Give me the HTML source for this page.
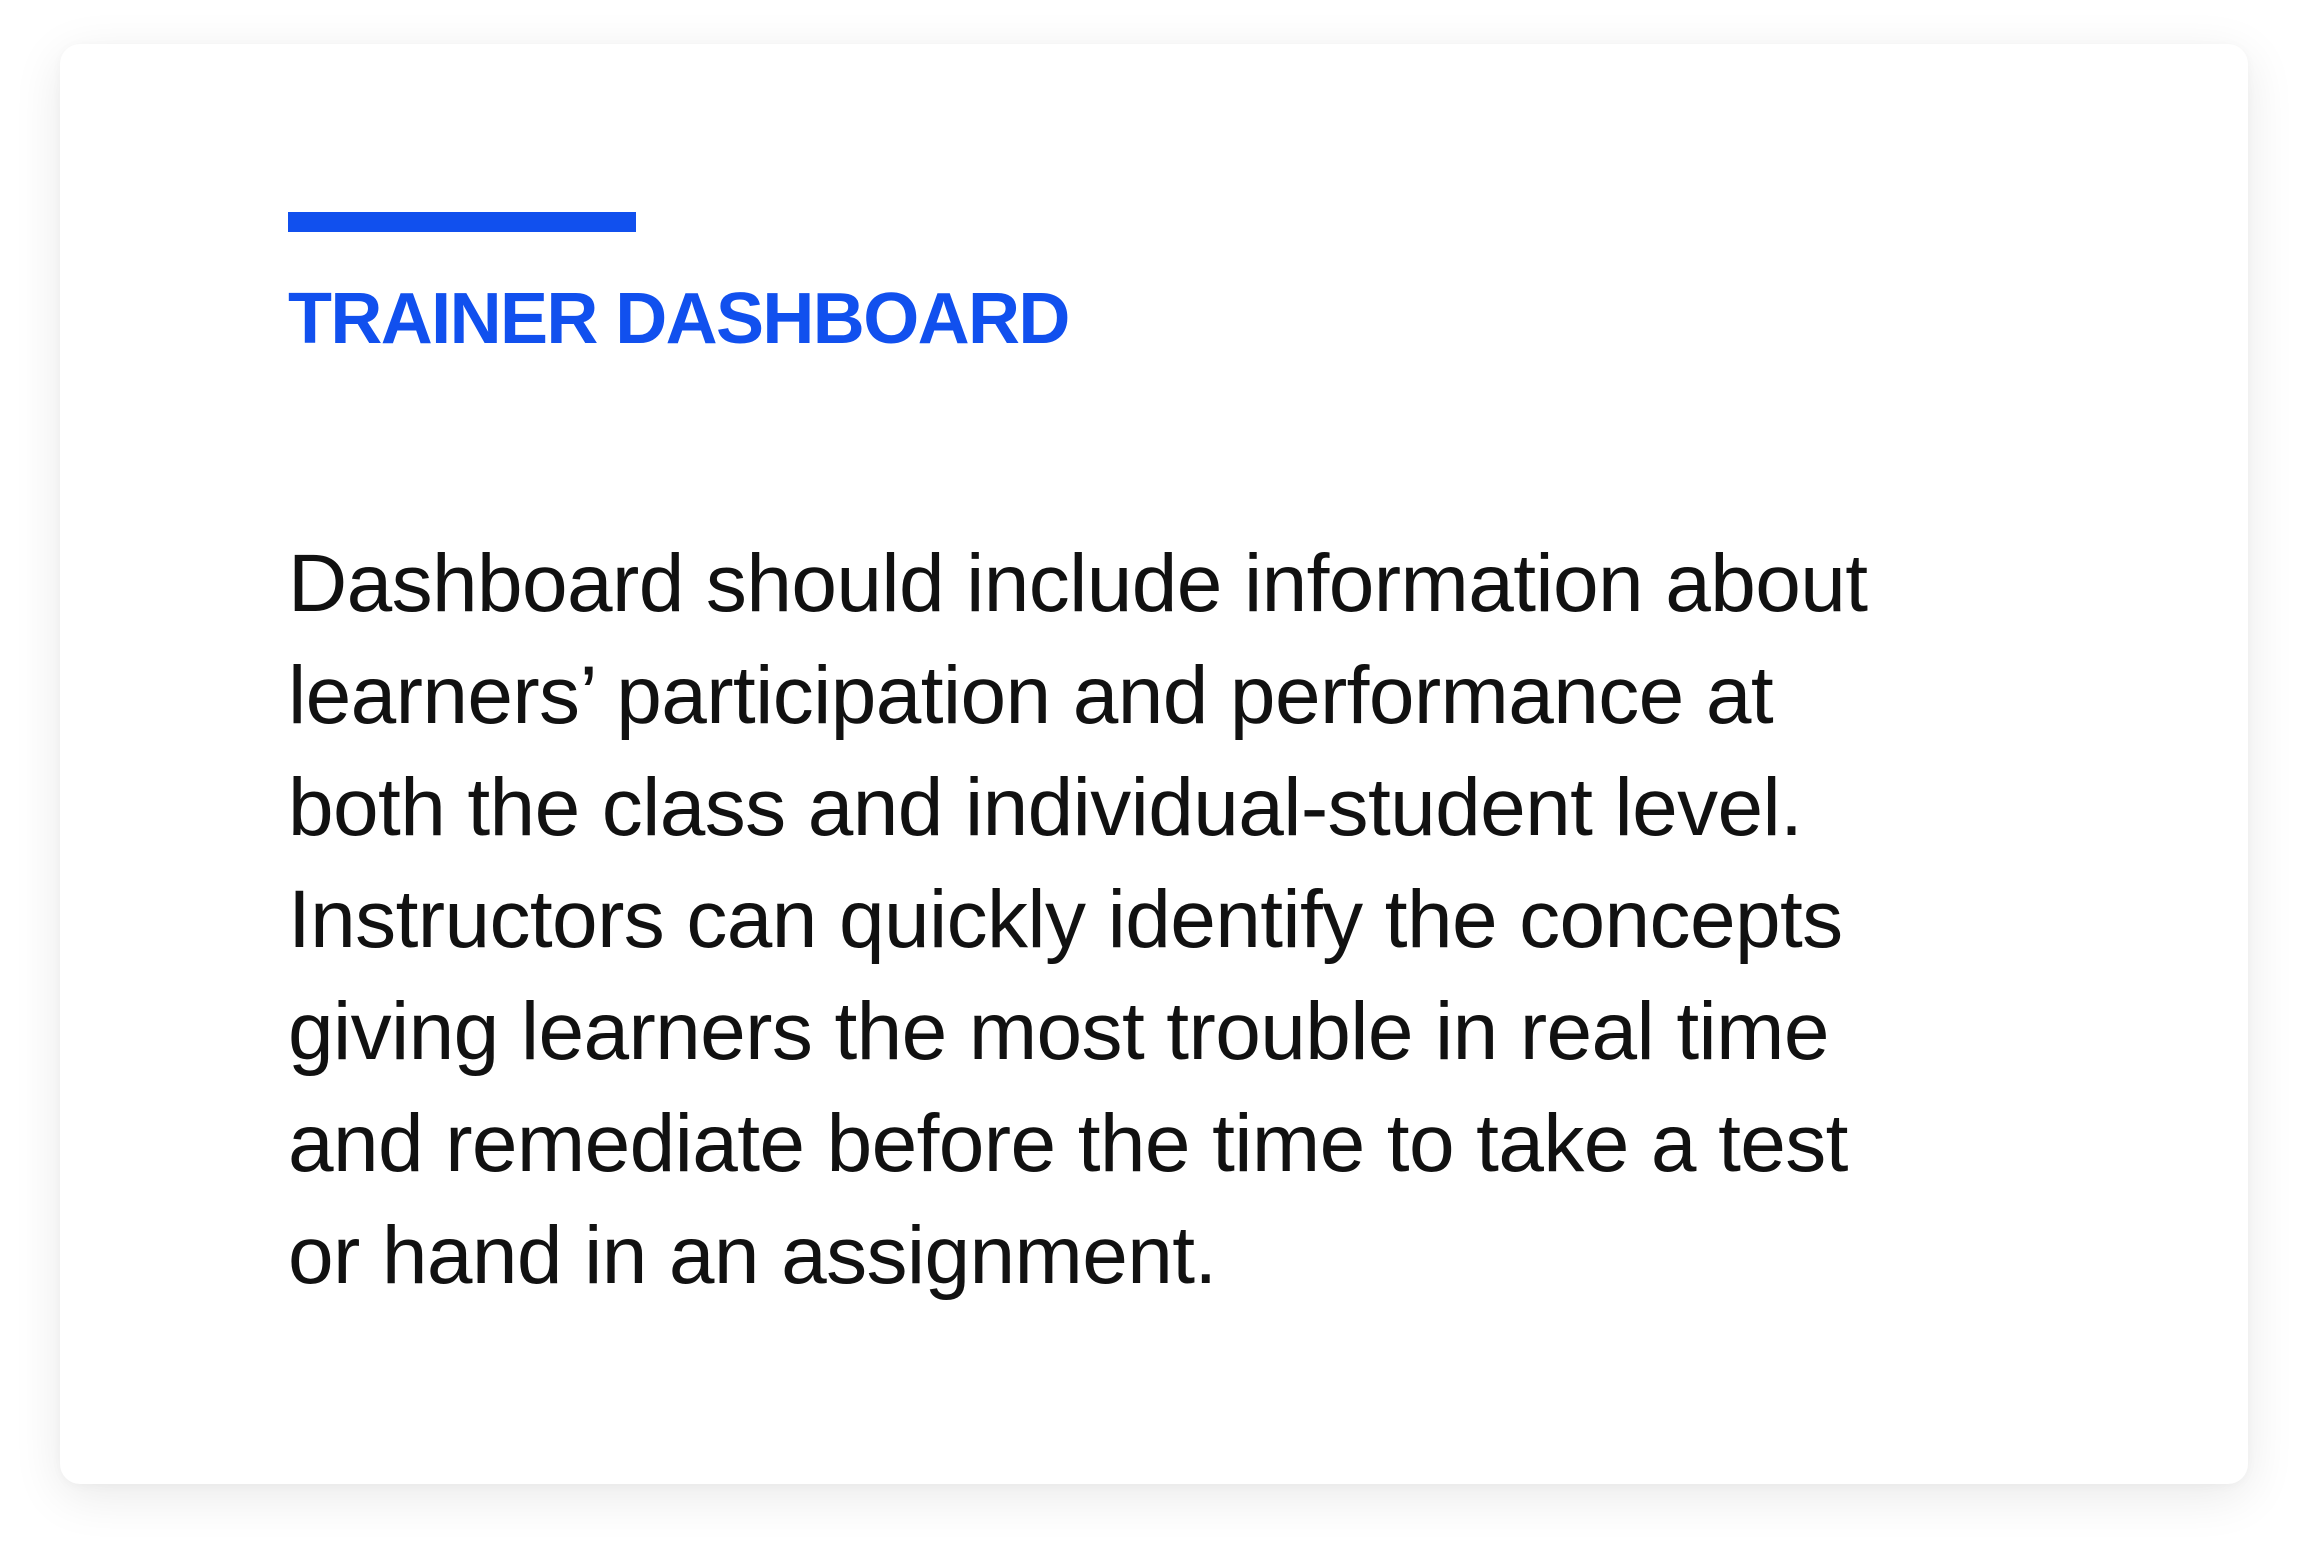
<!DOCTYPE html>
<html><head><meta charset="utf-8"><style>
html,body{margin:0;padding:0;background:#fff;width:2308px;height:1560px;overflow:hidden}
.card{position:absolute;left:60px;top:44px;width:2188px;height:1440px;background:#fff;border-radius:20px;box-shadow:0 12px 50px rgba(0,0,0,0.09),0 2px 10px rgba(0,0,0,0.03)}
.bar{position:absolute;left:288px;top:212px;width:348px;height:20px;background:#1150ee}
h1{position:absolute;left:288px;top:283px;margin:0;font:bold 72px/72px "Liberation Sans",sans-serif;color:#1150ee;white-space:nowrap;letter-spacing:-1.6px}
p{position:absolute;left:288px;top:528px;margin:0;font:82px/112px "Liberation Sans",sans-serif;color:#111;white-space:nowrap;letter-spacing:-0.6px}
</style></head><body>
<div class="card"></div>
<div class="bar"></div>
<h1>TRAINER DASHBOARD</h1>
<p>Dashboard should include information about<br>learners’ participation and performance at<br>both the class and individual-student level.<br>Instructors can quickly identify the concepts<br>giving learners the most trouble in real time<br>and remediate before the time to take a test<br>or hand in an assignment.</p>
</body></html>
